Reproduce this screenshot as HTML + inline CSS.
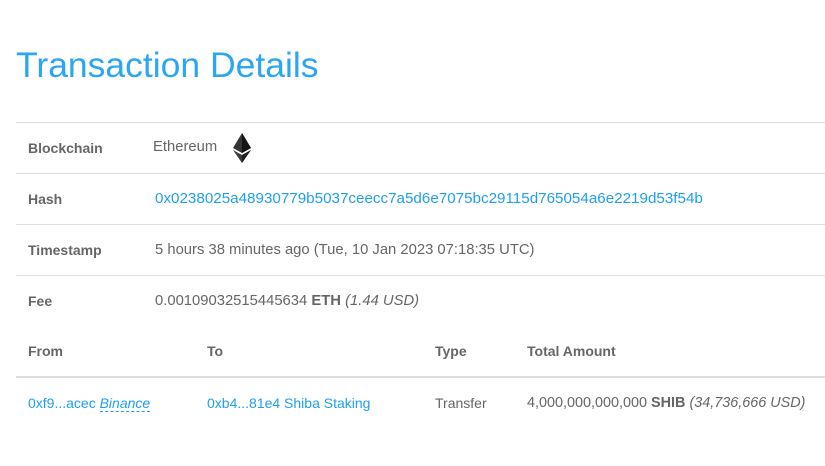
<!DOCTYPE html>
<html><head><meta charset="utf-8"><style>
body{margin:0;background:#fff;font-family:"Liberation Sans",sans-serif;color:#666;}
h1{position:absolute;left:16px;top:45px;margin:0;font-weight:normal;font-size:35.5px;color:#2ba6f2;}
.line{position:absolute;left:16px;right:0;height:1px;background:#dedede;}
.t{position:absolute;font-size:14.8px;white-space:nowrap;line-height:18px;}
.s{font-size:14px;}
.b{font-weight:bold;font-size:14px;}
.a{color:#1e9ff0;}
</style></head><body>
<h1>Transaction Details</h1>
<div class="line" style="top:122px"></div>
<div class="line" style="top:173px"></div>
<div class="line" style="top:224px"></div>
<div class="line" style="top:275px"></div>
<div class="line" style="top:376px;height:2px"></div>
<div class="t b" style="left:28px;top:139px">Blockchain</div>
<div class="t" style="left:153px;top:138px">Ethereum</div>
<svg style="position:absolute;left:232px;top:133px" width="20" height="30" viewBox="0 0 20 30">
<polygon points="10,0 19,15 10,20 1,15" fill="#343434"/>
<polygon points="10,0 19,15 10,20" fill="#141414"/>
<polygon points="1,17 10,22 19,17 10,30" fill="#3c3c3b"/>
<polygon points="10,22 19,17 10,30" fill="#222"/>
</svg>
<div class="t b" style="left:28px;top:190px">Hash</div>
<div class="t a" style="left:155px;top:190px;font-size:15.2px">0x0238025a48930779b5037ceecc7a5d6e7075bc29115d765054a6e2219d53f54b</div>
<div class="t b" style="left:28px;top:241px">Timestamp</div>
<div class="t" style="left:155px;top:241px">5 hours 38 minutes ago (Tue, 10 Jan 2023 07:18:35 UTC)</div>
<div class="t b" style="left:28px;top:292px">Fee</div>
<div class="t" style="left:155px;top:292px">0.00109032515445634 <b>ETH</b> <i>(1.44 USD)</i></div>
<div class="t b" style="left:28px;top:342px">From</div>
<div class="t b" style="left:207px;top:342px">To</div>
<div class="t b" style="left:435px;top:342px">Type</div>
<div class="t b" style="left:527px;top:342px">Total Amount</div>
<div class="t a s" style="left:28px;top:394px">0xf9...acec <i style="border-bottom:1px dashed #1e9ff0">Binance</i></div>
<div class="t a s" style="left:207px;top:394px">0xb4...81e4 Shiba Staking</div>
<div class="t s" style="left:435px;top:394px">Transfer</div>
<div class="t" style="left:527px;top:394px;font-size:14.4px">4,000,000,000,000 <b>SHIB</b> <i>(34,736,666 USD)</i></div>
</body></html>
